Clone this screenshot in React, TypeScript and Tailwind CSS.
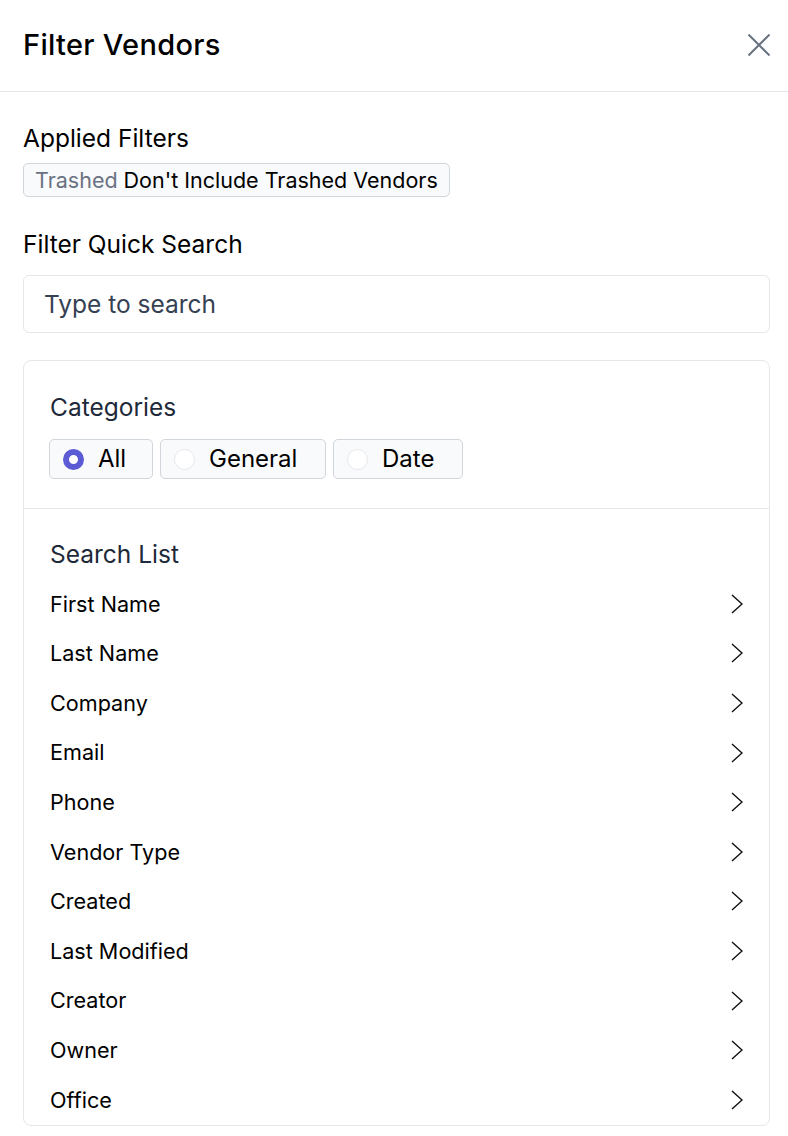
import { useState } from "react"

const fields = [
  "First Name",
  "Last Name",
  "Company",
  "Email",
  "Phone",
  "Vendor Type",
  "Created",
  "Last Modified",
  "Creator",
  "Owner",
  "Office",
]

const categories = [
  { id: "all", label: "All", w: "w-[104px]" },
  { id: "general", label: "General", w: "w-[166px]" },
  { id: "date", label: "Date", w: "w-[130px]" },
]

function Chevron() {
  return (
    <svg width="12" height="22" viewBox="0 0 12 22" fill="none" stroke="#111" strokeWidth="1.4">
      <path d="M1 2 L11 11 L1 20" />
    </svg>
  )
}

export default function App() {
  const [category, setCategory] = useState("all")
  const [query, setQuery] = useState("")

  return (
    <div className="h-[1136px] w-[788px] bg-white text-black font-['Inter','Liberation_Sans',sans-serif]">
      <div className="flex h-[92px] items-center justify-between border-b border-gray-200 pl-[23px] pr-[18px] pb-[1px]">
        <h1 className="text-[29px] font-medium tracking-[0.3px]">Filter Vendors</h1>
        <button className="text-gray-500">
          <svg width="22" height="22" viewBox="0 0 22 22" stroke="currentColor" strokeWidth="2">
            <path d="M0.5 0.5 L21.5 21.5 M21.5 0.5 L0.5 21.5" />
          </svg>
        </button>
      </div>

      <div className="pl-[23px] pr-[18px] pt-[31px]">
        <h2 className="text-[24.5px] leading-[30px]">Applied Filters</h2>
        <div className="mt-[10px] inline-flex h-[34px] items-center gap-[6px] rounded-[5px] border border-gray-300 bg-gray-50 px-[11px] text-[21.5px]">
          <span className="text-gray-500">Trashed</span>
          <span>Don't Include Trashed Vendors</span>
        </div>

        <h2 className="mt-[32px] text-[24.5px] leading-[30px]">Filter Quick Search</h2>
        <input
          value={query}
          onChange={(e) => setQuery(e.target.value)}
          placeholder="Type to search"
          className="mt-[16px] h-[58px] w-full rounded-[6px] border border-gray-200 px-[20px] text-[24.5px] text-gray-800 placeholder:text-gray-700 outline-none"
        />

        <div className="mt-[27px] rounded-[8px] border border-gray-200">
          <div className="border-b border-gray-200 px-[26px] pt-[31px] pb-[29px]">
            <h3 className="text-[24.5px] leading-[30px] text-gray-800">Categories</h3>
            <div className="mt-[17px] ml-[-1px] flex gap-[7px]">
              {categories.map((c) => (
                <button
                  key={c.id}
                  onClick={() => setCategory(c.id)}
                  className={`flex h-[40px] items-center gap-[14px] rounded-[5px] border border-gray-300 bg-gray-50 px-[13px] text-[24px] ${c.w}`}
                >
                  {category === c.id ? (
                    <span className="h-[21px] w-[21px] rounded-full border-[6px] border-[#5b5bd6] bg-white" />
                  ) : (
                    <span className="h-[21px] w-[21px] rounded-full border border-gray-200 bg-white" />
                  )}
                  <span>{c.label}</span>
                </button>
              ))}
            </div>
          </div>

          <div className="px-[26px] pt-[30px]">
            <h3 className="text-[24.5px] leading-[30px] text-gray-800">Search List</h3>
            <ul className="mt-[10px]">
              {fields.map((f) => (
                <li key={f} className="flex h-[49.6px] items-center justify-between text-[21.6px]">
                  <span>{f}</span>
                  <Chevron />
                </li>
              ))}
            </ul>
          </div>
        </div>
      </div>
    </div>
  )
}
